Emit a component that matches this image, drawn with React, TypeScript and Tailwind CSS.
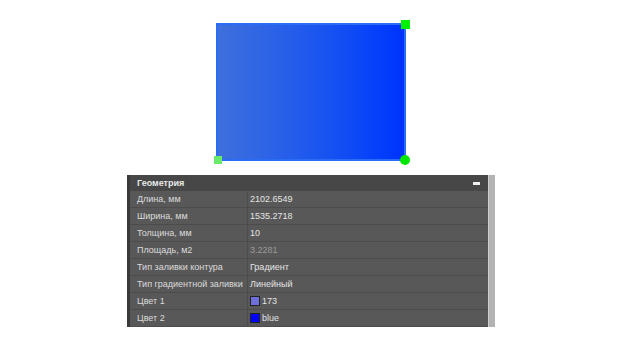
import React from 'react';

interface Row {
    label: string;
    value: string;
    dim?: boolean;
    swatch?: string;
}

const rows: Row[] = [
    { label: 'Длина, мм', value: '2102.6549' },
    { label: 'Ширина, мм', value: '1535.2718' },
    { label: 'Толщина, мм', value: '10' },
    { label: 'Площадь, м2', value: '3.2281', dim: true },
    { label: 'Тип заливки контура', value: 'Градиент' },
    { label: 'Тип градиентной заливки', value: 'Линейный' },
    { label: 'Цвет 1', value: '173', swatch: 'bg-[#6f6fdc]' },
    { label: 'Цвет 2', value: 'blue', swatch: 'bg-[#0000ff]' },
];

const Shape = () => (
    <div className="relative ml-[216px] mt-[23px] w-[190px] h-[138px] border-2 border-[#2a6cf4] bg-gradient-to-r from-[#3e6fdc] to-[#0032ff]">
        <div className="absolute -right-[6px] -top-[5px] w-[9px] h-[9px] bg-[#00f000]" />
        <div className="absolute -left-[4px] -bottom-[5px] w-[8px] h-[8px] bg-[#6aea6a]" />
        <div className="absolute -right-[6px] -bottom-[6px] w-[10px] h-[10px] rounded-full bg-[#00e600]" />
    </div>
);

const PropertyPanel = () => (
    <div className="flex ml-[127px] mt-[14px] w-[368px] text-[9px] leading-none" style={{ fontFamily: '"Liberation Sans", Arial, sans-serif' }}>
        <div className="w-[3px] bg-[#3a3a3a]" />
        <div className="flex-1 flex flex-col bg-[#585858]">
            <div className="h-[16px] flex items-center justify-between pl-[7px] pr-[8px] bg-[#474747] text-[#e8e8e8] font-bold">
                <span>Геометрия</span>
                <span className="w-[7px] h-[3px] bg-[#f0f0f0]" />
            </div>
            {rows.map((r) => (
                <div key={r.label} className="h-[17px] flex border-b border-[#4c4c4c]">
                    <div className="w-[118px] flex items-center pl-[7px] text-[#dcdcdc] border-r border-[#4c4c4c]">
                        {r.label}
                    </div>
                    <div className={`flex-1 flex items-center pl-[2px] ${r.dim ? 'text-[#9a9a9a]' : 'text-[#e4e4e4]'}`}>
                        {r.swatch && <span className={`w-[10px] h-[10px] mr-[2px] border border-[#222] ${r.swatch}`} />}
                        {r.value}
                    </div>
                </div>
            ))}
        </div>
        <div className="w-[7px] bg-[#b3b3b3] border-l border-[#cfcfcf]" />
    </div>
);

export default function App() {
    return (
        <div className="w-[622px] h-[350px] bg-white flex flex-col overflow-hidden">
            <Shape />
            <PropertyPanel />
        </div>
    );
}
